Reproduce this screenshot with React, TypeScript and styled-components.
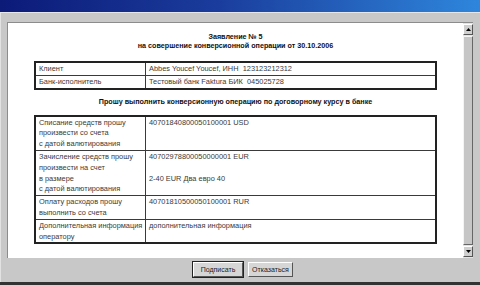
import styled, { createGlobalStyle } from 'styled-components';

const GlobalStyle = createGlobalStyle`
  html, body {
    margin: 0;
    padding: 0;
    background: #c8c8c8;
  }
  body {
    font-family: 'Liberation Sans', Arial, sans-serif;
  }
`;

type Row = { label: string[]; value: string[] };

const clientRows: Row[] = [
  { label: ['Клиент'], value: ['Abbes Youcef Youcef, ИНН\u00a0\u00a0123123212312'] },
  { label: ['Банк-исполнитель'], value: ['Тестовый банк Faktura БИК\u00a0\u00a0045025728'] },
];

const operationRows: Row[] = [
  {
    label: ['Списание средств прошу', 'произвести со счета', 'с датой валютирования'],
    value: ['40701840800050100001 USD'],
  },
  {
    label: ['Зачисление средств прошу', 'произвести на счет', 'в размере', 'с датой валютирования'],
    value: ['40702978800050000001 EUR', '', '2-40 EUR Два евро 40'],
  },
  {
    label: ['Оплату расходов прошу', 'выполнить со счета'],
    value: ['40701810500050100001 RUR'],
  },
  {
    label: ['Дополнительная информация', 'оператору'],
    value: ['дополнительная информация'],
  },
];

const DocTable = ({ rows }: { rows: Row[] }) => (
  <Table>
    <tbody>
      {rows.map((row, i) => (
        <tr key={i}>
          <LabelCell>
            {row.label.map((line, j) => (
              <Line key={j}>{line}</Line>
            ))}
          </LabelCell>
          <ValueCell>
            {row.value.map((line, j) => (
              <Line key={j}>{line || '\u00a0'}</Line>
            ))}
          </ValueCell>
        </tr>
      ))}
    </tbody>
  </Table>
);

const ArrowIcon = ({ down }: { down?: boolean }) => (
  <svg width="5" height="3" viewBox="0 0 5 3">
    <path d={down ? 'M0 0H5L2.5 3Z' : 'M0 3H5L2.5 0Z'} fill="#000" />
  </svg>
);

const App = () => {
  return (
    <>
      <GlobalStyle />
      <Window>
        <TitleBar />
        <Body>
          <Frame>
            <Content>
              <Heading>
                <div>Заявление № 5</div>
                <div>на совершение конверсионной операции от 30.10.2006</div>
              </Heading>
              <DocTable rows={clientRows} />
              <SubHeading>Прошу выполнить конверсионную операцию по договорному курсу в банке</SubHeading>
              <DocTable rows={operationRows} />
            </Content>
            <Scrollbar>
              <ScrollButton>
                <ArrowIcon />
              </ScrollButton>
              <Thumb />
              <ScrollButton>
                <ArrowIcon down />
              </ScrollButton>
            </Scrollbar>
          </Frame>
          <ButtonRow>
            <Button $primary>Подписать</Button>
            <Button>Отказаться</Button>
          </ButtonRow>
        </Body>
        <BottomEdge />
      </Window>
    </>
  );
};

export default App;

const Window = styled.div`
  width: 480px;
  height: 285px;
  display: flex;
  flex-direction: column;
  background: #c8c8c8;
  overflow: hidden;
`;

const TitleBar = styled.div`
  height: 12px;
  flex-shrink: 0;
  background: linear-gradient(90deg, #0c1a78 0%, #1a3c9c 45%, #2e86dc 100%);
  border-bottom: 1px solid #e6e6e6;
`;

const Body = styled.div`
  flex: 1;
  display: flex;
  flex-direction: column;
  padding: 9px 7px 0 6px;
  border-left: 1px solid #e2e2e2;
`;

const Frame = styled.div`
  height: 235px;
  display: flex;
  border-left: 1px solid #8c8c8c;
  border-top: 1px solid #8c8c8c;
  background: #fff;
`;

const Content = styled.div`
  flex: 1;
  display: flex;
  flex-direction: column;
  align-items: center;
  padding-top: 9px;
  color: #3a3a3a;
  font-size: 7.4px;
`;

const Heading = styled.div`
  text-align: center;
  font-weight: bold;
  font-size: 7.2px;
  color: #111;
  line-height: 9px;
  margin-bottom: 11px;
`;

const SubHeading = styled.div`
  font-weight: bold;
  font-size: 7.2px;
  color: #111;
  line-height: 10px;
  margin: 7px 0 8px;
`;

const Table = styled.table`
  width: 403px;
  border-collapse: collapse;
  border: 2px solid #222;
  table-layout: fixed;
`;

const LabelCell = styled.td`
  width: 103px;
  border: 1px solid #3a3a3a;
  padding: 1px 3px 0 3px;
  vertical-align: top;
`;

const ValueCell = styled.td`
  border: 1px solid #3a3a3a;
  padding: 1px 3px 0 3px;
  vertical-align: top;
`;

const Line = styled.div`
  line-height: 10.8px;
  white-space: nowrap;
`;

const Scrollbar = styled.div`
  width: 10px;
  flex-shrink: 0;
  display: flex;
  flex-direction: column;
  background: #e4e4e4;
  padding: 1px 0 1px 0;
`;

const ScrollButton = styled.div`
  height: 9px;
  display: flex;
  align-items: center;
  justify-content: center;
  background: #cfcfcf;
  border-top: 1px solid #fff;
  border-left: 1px solid #fff;
  border-right: 1px solid #555;
  border-bottom: 1px solid #555;
`;

const Thumb = styled.div`
  flex: 1;
  margin: 1px 0;
  background: #c6c6c6;
  border-top: 1px solid #f4f4f4;
  border-left: 1px solid #f4f4f4;
  border-right: 1px solid #666;
  border-bottom: 1px solid #666;
`;

const ButtonRow = styled.div`
  display: flex;
  justify-content: center;
  gap: 5px;
  margin-top: 4px;
  padding-left: 6px;
`;

const Button = styled.button<{ $primary?: boolean }>`
  height: 15px;
  width: ${({ $primary }) => ($primary ? '50px' : '45px')};
  padding: 0;
  font-family: 'Liberation Sans', Arial, sans-serif;
  font-size: 7px;
  color: #222;
  background: #d6d6d6;
  border: 1px solid;
  border-color: #fff #555 #555 #fff;
  outline: ${({ $primary }) => ($primary ? '1px solid #222' : 'none')};
  outline-offset: 0;
`;

const BottomEdge = styled.div`
  height: 3px;
  flex-shrink: 0;
  background: #333;
`;
